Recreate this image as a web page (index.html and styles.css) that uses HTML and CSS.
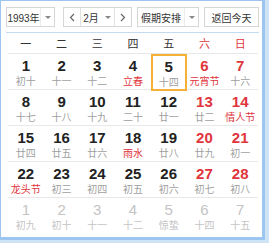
FILE: index.html
```html
<!DOCTYPE html>
<html lang="zh-CN">
  <head>
    <meta charset="UTF-8" />
    <title>万年历</title>
    <link rel="stylesheet" href="styles.css">
  </head>
  <body>
    <div class="calendar">
      <div class="toolbar">
        <div class="box year-box">
          <span class="box-text">1993年</span>
          <span class="caret-cell"><i class="caret"></i></span>
        </div>
        <div class="box month-box">
          <span class="arrow-cell">
            <svg width="6" height="9" viewBox="0 0 6 9"><polyline points="5,1 1.5,4.5 5,8" fill="none" stroke="#666" stroke-width="1.2"/></svg>
          </span>
          <span class="box-text month-text">2月</span>
          <span class="caret-cell"><i class="caret"></i></span>
          <span class="arrow-cell">
            <svg width="6" height="9" viewBox="0 0 6 9"><polyline points="1,1 4.5,4.5 1,8" fill="none" stroke="#666" stroke-width="1.2"/></svg>
          </span>
        </div>
        <div class="box holiday-box">
          <span class="box-text">假期安排</span>
          <span class="caret-cell"><i class="caret"></i></span>
        </div>
        <div class="box today-box">返回今天</div>
      </div>

      <div class="grid">
        <div class="week-head">
          <span>一</span><span>二</span><span>三</span><span>四</span><span>五</span>
          <span class="red">六</span><span class="red">日</span>
        </div>
        <div id="days"></div>
      </div>
    </div>

    <script>
      // [day, lunar, festival?, weekend?, other month?]
      const days = [
        [1, "初十"], [2, "十一"], [3, "十二"], [4, "立春", 1], [5, "十四"], [6, "元宵节", 1, 1], [7, "十六", 0, 1],
        [8, "十七"], [9, "十八"], [10, "十九"], [11, "二十"], [12, "廿一"], [13, "廿二", 0, 1], [14, "情人节", 1, 1],
        [15, "廿四"], [16, "廿五"], [17, "廿六"], [18, "雨水", 1], [19, "廿八"], [20, "廿九", 0, 1], [21, "初一", 0, 1],
        [22, "龙头节", 1], [23, "初三"], [24, "初四"], [25, "初五"], [26, "初六"], [27, "初七", 0, 1], [28, "初八", 0, 1],
        [1, "初九", 0, 0, 1], [2, "初十", 0, 0, 1], [3, "十一", 0, 0, 1], [4, "十二", 0, 0, 1], [5, "惊蛰", 0, 0, 1], [6, "十四", 0, 0, 1], [7, "十五", 0, 0, 1]
      ];

      const daysEl = document.getElementById("days");
      for (let r = 0; r < 5; r++) {
        const row = document.createElement("div");
        row.className = "week-row";
        for (let c = 0; c < 7; c++) {
          const [num, lunar, fest, weekend, other] = days[r * 7 + c];
          const cell = document.createElement("div");
          cell.className = "day";
          if (other) cell.classList.add("other");
          if (weekend) cell.classList.add("weekend");
          if (fest) cell.classList.add("festival");
          if (r === 0 && num === 5) cell.classList.add("selected");
          cell.innerHTML = `<span class="num">${num}</span><span class="lunar">${lunar}</span>`;
          row.appendChild(cell);
        }
        daysEl.appendChild(row);
      }
    </script>
  </body>
</html>
```

FILE: styles.css
```css
body {
  margin: 0;
  background-color: #cfe3f7;
  font-family: "Liberation Sans", "Noto Sans CJK SC", sans-serif;
}

.calendar {
  box-sizing: border-box;
  width: 265px;
  height: 240px;
  background-color: #fff;
  border: 1px solid #9cc6ef;
  border-right-width: 3px;
  border-bottom-width: 3px;
  padding: 6px 3px 0 5px;
}

.toolbar {
  display: flex;
  height: 20px;
  padding-bottom: 5px;
  border-bottom: 1px solid #c3daf0;
}

.box {
  box-sizing: border-box;
  display: flex;
  align-items: center;
  height: 20px;
  border: 1px solid #d6d6d6;
  font-size: 10px;
  color: #333;
  white-space: nowrap;
}

.box-text {
  flex: 1;
  text-align: center;
}

.year-box {
  width: 49px;
  margin-right: 8px;
}

.month-box {
  width: 69px;
  margin-right: 5px;
}

.holiday-box {
  width: 62px;
  margin-right: 5px;
}

.today-box {
  width: 55px;
  justify-content: center;
}

.caret-cell,
.arrow-cell {
  display: flex;
  align-items: center;
  justify-content: center;
  height: 100%;
  width: 13px;
  flex: none;
}

.caret-cell {
  border-left: 1px solid #ececec;
}

.arrow-cell {
  width: 16px;
}

.month-box .arrow-cell:first-child {
  border-right: 1px solid #e2e2e2;
}

.month-box .arrow-cell:last-child {
  border-left: 1px solid #e2e2e2;
}

.month-box .caret-cell {
  border-left: none;
}

.caret {
  width: 0;
  height: 0;
  border-left: 3px solid transparent;
  border-right: 3px solid transparent;
  border-top: 3px solid #888;
}

.grid {
  margin: 0 1px 0 2px;
}

.week-head {
  display: grid;
  grid-template-columns: repeat(7, 1fr);
  height: 20px;
  line-height: 20px;
  border-bottom: 1px solid #e8e8e8;
  font-family: "Noto Sans CJK SC", sans-serif;
  font-size: 11px;
  color: #333;
  text-align: center;
}

.red {
  color: #e0353c;
}

.week-row {
  display: grid;
  grid-template-columns: repeat(7, 1fr);
  height: 35px;
  border-bottom: 1px solid #e8e8e8;
}

.week-row:last-child {
  border-bottom: none;
}

.day {
  box-sizing: border-box;
  display: flex;
  flex-direction: column;
  align-items: center;
  justify-content: center;
  height: 100%;
  padding-top: 1px;
}

.num {
  font-size: 15px;
  font-weight: bold;
  color: #222;
  line-height: 17px;
}

.lunar {
  font-family: "Noto Sans CJK SC", sans-serif;
  font-size: 10px;
  line-height: 14px;
  color: #a0a0a0;
}

.weekend .num {
  color: #e0353c;
}

.festival .lunar {
  color: #e0353c;
}

.other .num {
  color: #c4c4c4;
  font-weight: normal;
}

.other .lunar {
  color: #c4c4c4;
}

.selected {
  border: 2px solid #f5b035;
  height: calc(100% + 1px);
}
```
